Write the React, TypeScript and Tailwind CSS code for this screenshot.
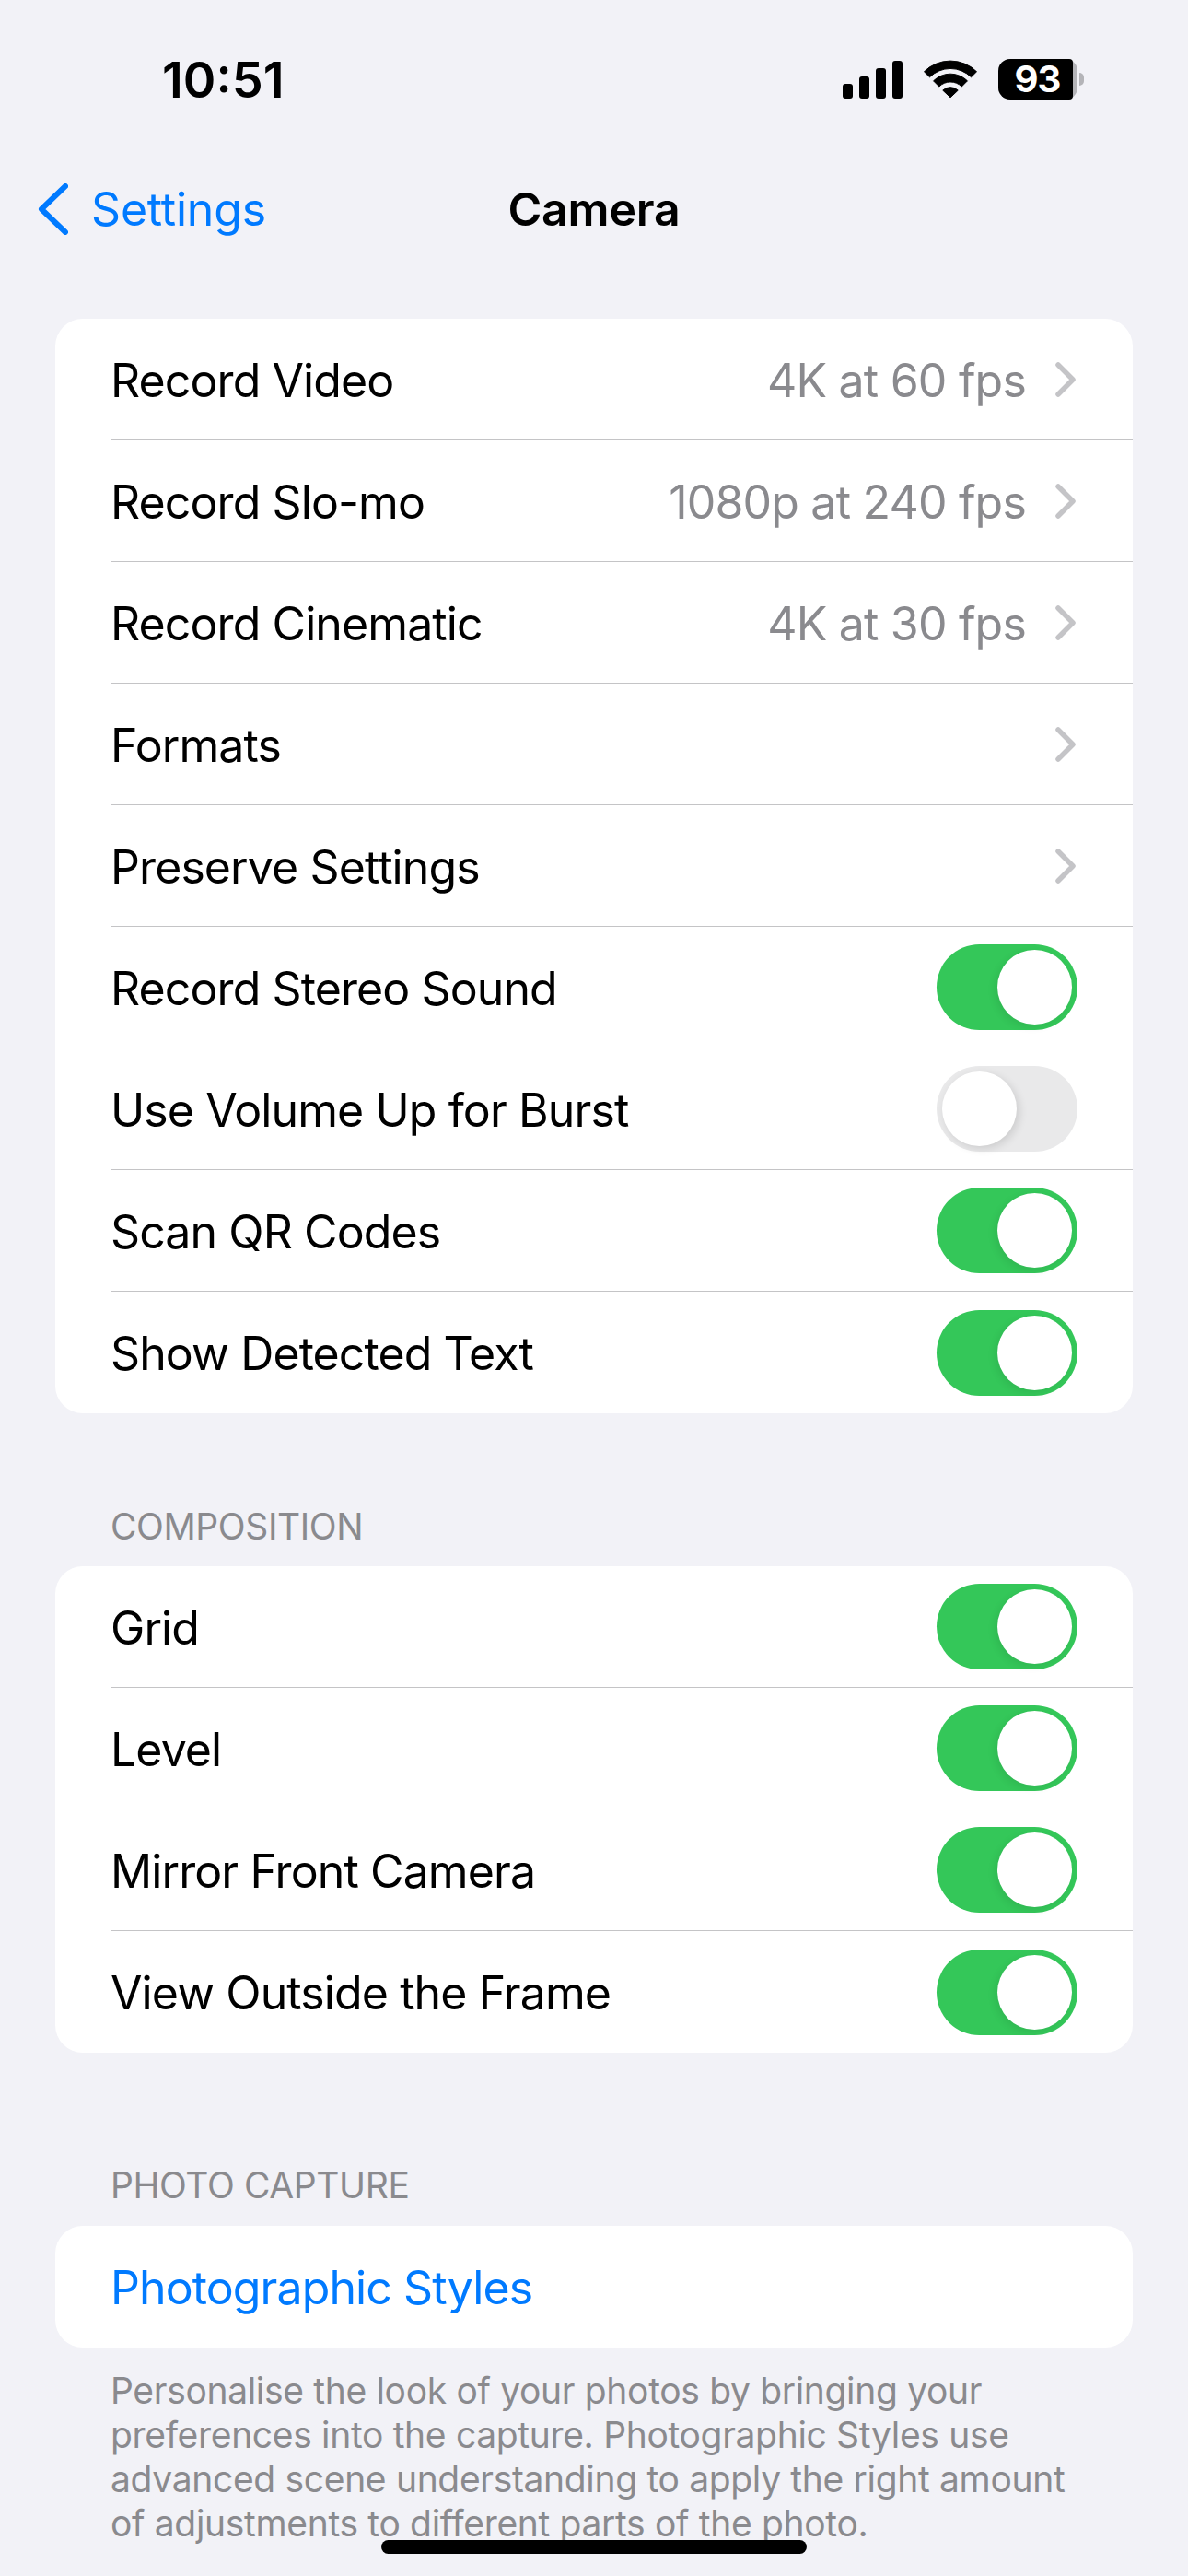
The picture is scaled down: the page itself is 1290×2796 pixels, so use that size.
const ToggleOn = () => (
  <div className="flex h-[93px] w-[153px] items-center justify-end rounded-full bg-[#34c759] pr-[6px]">
    <div className="h-[81px] w-[81px] rounded-full bg-white shadow-[-3px_3px_8px_rgba(0,0,0,0.08)]" />
  </div>
);

const ToggleOff = () => (
  <div className="flex h-[93px] w-[153px] items-center justify-start rounded-full bg-[#e9e9ea] pl-[6px]">
    <div className="h-[81px] w-[81px] rounded-full bg-white shadow-[3px_3px_10px_rgba(0,0,0,0.12)]" />
  </div>
);

const Chevron = () => (
  <svg width="22" height="38" viewBox="0 0 22 38" fill="none">
    <path d="M3 3l16 16L3 35" stroke="#c4c4c7" strokeWidth="5.5" strokeLinecap="round" strokeLinejoin="round" />
  </svg>
);

type RowProps = {
  label: string;
  value?: string;
  toggle?: "on" | "off";
  last?: boolean;
  link?: boolean;
};

const Row = ({ label, value, toggle, last, link }: RowProps) => (
  <div className="flex h-[132px] pl-[60px]">
    <div className={`flex flex-1 items-center justify-between pr-[60px] ${last ? "" : "border-b border-[#c4c4c6]"}`}>
      <span className={`pt-[3px] text-[50px] tracking-[-0.9px] ${link ? "text-[#007aff]" : "text-black"}`}>{label}</span>
      {toggle === "on" && <ToggleOn />}
      {toggle === "off" && <ToggleOff />}
      {!toggle && !link && (
        <div className="flex items-center gap-[32px] pr-[2px]">
          {value && <span className="pt-[3px] text-[50px] tracking-[-0.8px] text-[#8a8a8e]">{value}</span>}
          <Chevron />
        </div>
      )}
    </div>
  </div>
);

const Card = ({ children }: { children: React.ReactNode }) => (
  <div className="mx-[60px] overflow-hidden rounded-[30px] bg-white">{children}</div>
);

const SectionHeader = ({ title }: { title: string }) => (
  <div className="px-[120px] text-[39px] leading-[48px] tracking-[-0.4px] text-[#8a8a8e]">{title}</div>
);

const Signal = () => (
  <div className="flex items-end gap-[7px]">
    <div className="h-[16px] w-[11px] rounded-[3px] bg-black" />
    <div className="h-[24px] w-[11px] rounded-[3px] bg-black" />
    <div className="h-[33px] w-[11px] rounded-[3px] bg-black" />
    <div className="h-[41px] w-[11px] rounded-[3px] bg-black" />
  </div>
);

const Wifi = () => (
  <svg width="58" height="42" viewBox="0 0 60 42" fill="black" stroke="black" strokeWidth="1" strokeLinejoin="round">
    <path d="M.5 12.5A42 42 0 0 1 59.5 12.5L53.3 18.7A33 33 0 0 0 6.7 18.7Z" />
    <path d="M10.9 22.9A27 27 0 0 1 49.1 22.9L42.7 29.3A18 18 0 0 0 17.3 29.3Z" />
    <path d="M21.5 33.5A12 12 0 0 1 38.5 33.5L30 41.5Z" />
  </svg>
);

const Battery = () => (
  <div className="flex items-center gap-[2px]">
    <div className="flex h-[44px] w-[86px] rounded-[13px] bg-[#b4b4b8]">
      <div className="flex h-full w-[81px] items-center justify-center rounded-l-[13px] rounded-r-[4px] bg-black pl-[4px] text-[40px] font-bold leading-[44px] tracking-[-1px] text-white">
        93
      </div>
    </div>
    <div className="h-[14px] w-[5px] rounded-r-full bg-[#b4b4b8]" />
  </div>
);

export default function App() {
  return (
    <div
      className="relative flex h-[2796px] w-[1290px] flex-col overflow-hidden bg-[#f2f2f7]"
      style={{ fontFamily: "Inter, 'Noto Sans', sans-serif" }}
    >
      <div className="flex h-[172px] shrink-0 items-center justify-between pl-[176px] pr-[113px]">
        <span className="text-[54px] font-semibold tracking-[0px] text-black">10:51</span>
        <div className="flex items-center gap-[23px]">
          <Signal />
          <Wifi />
          <Battery />
        </div>
      </div>

      <div className="relative flex h-[110px] shrink-0 items-center justify-center">
        <div className="absolute left-[40px] flex items-center gap-[25px] text-[#007aff]">
          <svg width="34" height="56" viewBox="0 0 34 56" fill="none">
            <path d="M31 3L5 28l26 25" stroke="#007aff" strokeWidth="6" strokeLinecap="round" strokeLinejoin="round" />
          </svg>
          <span className="text-[50px] tracking-[-0.2px]">Settings</span>
        </div>
        <span className="text-[50px] font-semibold tracking-[-0.2px] text-black">Camera</span>
      </div>

      <div className="mt-[64px]">
        <Card>
          <Row label="Record Video" value="4K at 60 fps" />
          <Row label="Record Slo-mo" value="1080p at 240 fps" />
          <Row label="Record Cinematic" value="4K at 30 fps" />
          <Row label="Formats" />
          <Row label="Preserve Settings" />
          <Row label="Record Stereo Sound" toggle="on" />
          <Row label="Use Volume Up for Burst" toggle="off" />
          <Row label="Scan QR Codes" toggle="on" />
          <Row label="Show Detected Text" toggle="on" last />
        </Card>
      </div>

      <div className="mt-[99px] mb-[19px]">
        <SectionHeader title="COMPOSITION" />
      </div>
      <Card>
        <Row label="Grid" toggle="on" />
        <Row label="Level" toggle="on" />
        <Row label="Mirror Front Camera" toggle="on" />
        <Row label="View Outside the Frame" toggle="on" last />
      </Card>

      <div className="mt-[120px] mb-[20px]">
        <SectionHeader title="PHOTO CAPTURE" />
      </div>
      <Card>
        <Row label="Photographic Styles" link last />
      </Card>

      <p className="mt-[23px] px-[120px] text-[39px] leading-[48px] tracking-[-0.33px] text-[#8a8a8e]">
        Personalise the look of your photos by bringing your
        <br />
        preferences into the capture. Photographic Styles use
        <br />
        advanced scene understanding to apply the right amount
        <br />
        of adjustments to different parts of the photo.
      </p>

      <div className="absolute bottom-[24px] left-[414px] h-[15px] w-[462px] rounded-full bg-black" />
    </div>
  );
}
